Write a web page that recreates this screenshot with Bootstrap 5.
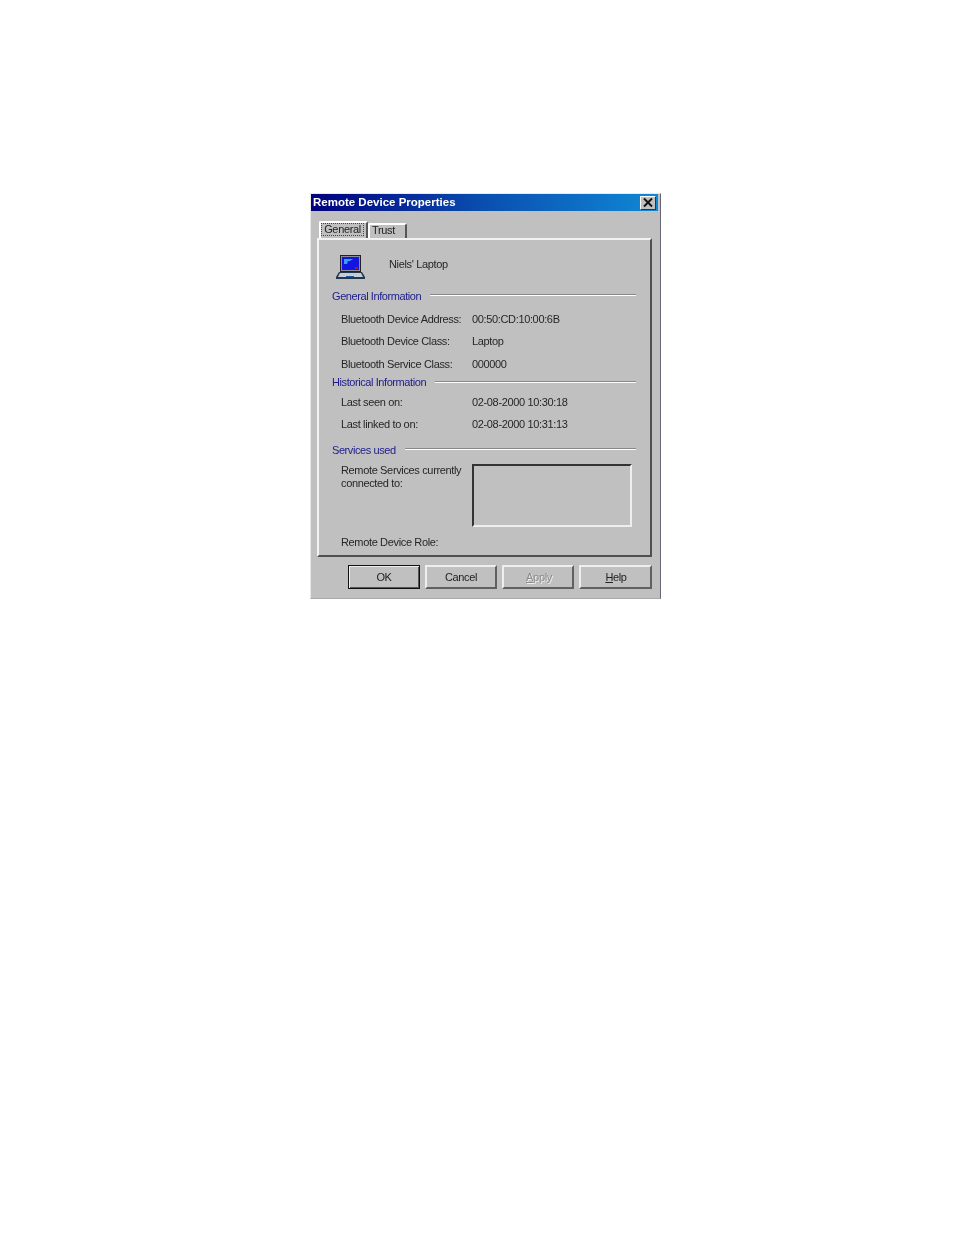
<!DOCTYPE html>
<html lang="en">
<head>
<meta charset="utf-8">
<title>Remote Device Properties</title>
<link href="https://cdn.jsdelivr.net/npm/bootstrap@5.3.0/dist/css/bootstrap.min.css" rel="stylesheet">
<style>
html,body{background:#fff;height:100%;}
body{font-family:"Liberation Sans",Arial,sans-serif;font-size:11px;letter-spacing:-.35px;color:#262626;padding:193px 0 0 310px;}
.dlg{width:351px;height:406px;background:#c0c0c0;border:1px solid #e8e8e8;border-right-color:#667;border-bottom-color:#aaa;filter:blur(.45px);}
.ttl{height:17px;margin-right:2px;background:linear-gradient(90deg,#00007e,#0a4fb0 50%,#1088d4);color:#fff;font-weight:700;font-size:11.5px;letter-spacing:0;padding:0 2px;}
.xbtn{width:16px;height:14px;background:#c0c0c0;border:1px solid;border-color:#fff #333 #333 #fff;}
.tabs{height:27px;padding:10px 0 0 8px;align-items:flex-end;}
.tb{border:2px solid #fff;border-bottom:0;border-right:2px solid #555;border-radius:2px 2px 0 0;display:flex;align-items:center;justify-content:center;color:#222;}
.tb1{width:49px;height:17px;padding-right:2px;}
.tb1 span{border:1px dotted #444;padding:0 2px;line-height:11px;margin-top:-2px;}
.tb2{width:39px;height:15px;padding:0 8px 2px 0;}
.pnl{margin-left:6px;width:335px;height:319px;border:2px solid;border-color:#f2f2f2 #505050 #505050 #f2f2f2;}
.rw{display:flex;align-items:center;}
.hd{color:#1c1c8c;padding-left:13px;letter-spacing:-.42px;}
.hd i{flex:1;height:2px;margin:0 14px 3px 9px;background:linear-gradient(#888 50%,#fff 50%);}
.hd i.lo{margin-bottom:1px;}
.lbl{width:153px;padding-left:22px;flex:none;white-space:nowrap;}
.lst{width:160px;height:63px;border:2px solid;border-color:#333 #eee #eee #333;margin-top:5px;}
.acts{height:41px;padding:8px 8px 0 0;gap:5px;}
.wb{width:72px;height:24px;background:#c0c0c0;border:2px solid;border-color:#eee #606060 #606060 #eee;display:flex;align-items:center;justify-content:center;color:#222;}
.wb.def{border-width:1px;border-color:#111;box-shadow:inset 1px 1px #eee,inset -1px -1px #555;}
.wb.dis{color:#8c8c8c;text-shadow:1px 1px #eee;padding-left:2px;}
.wb.wid{width:73px;padding-left:1px;}
.r0{height:22px;}
.r0.nudge{margin-top:1px;}
.top0{height:50px;padding-left:15px;}
.lap{margin-top:3px;}
.nm{margin:0 0 1px 23px;}
.hd1{height:12px;margin-bottom:6px;}
.hd2{height:14px;}
.hd3{height:14px;margin-top:8px;}
.seen{margin-top:2px;}
.svc{margin-top:2px;}
.svcl{line-height:12.5px;padding-top:5px;}
.role{height:14px;padding-left:22px;margin-top:8px;}
</style>
</head>
<body>
<div class="dlg">
  <div class="ttl d-flex align-items-center justify-content-between"><span>Remote Device Properties</span>
    <span class="xbtn d-flex align-items-center justify-content-center"><svg width="10" height="9" viewBox="0 0 10 9"><path d="M1 0.5 9 8.5M9 0.5 1 8.5" stroke="#111" stroke-width="2" fill="none"/></svg></span>
  </div>
  <div class="tabs d-flex"><div class="tb tb1"><span>General</span></div><div class="tb tb2">Trust</div></div>
  <div class="pnl">
    <div class="rw top0">
      <svg width="32" height="26" viewBox="0 0 32 26" class="flex-none lap">
        <rect x="6" y="1" width="21" height="17" fill="#222"/><rect x="7" y="2" width="19" height="15" fill="#8a8f9a"/>
        <rect x="8" y="3" width="17" height="13" fill="#1414e0"/><path d="M10 5h9l-3 2h-2l-1 3h-3z" fill="#35a0ee"/><rect x="21" y="13" width="3" height="2" fill="#c01020"/>
        <path d="M5 18h23l3 5v2H2v-2z" fill="#23384c"/><path d="M6 19h21l2 4H4z" fill="#c8ccd4"/><rect x="12" y="22" width="8" height="1" fill="#1a5fa8"/>
      </svg>
      <span class="nm">Niels' Laptop</span>
    </div>
    <div class="rw hd hd1"><span>General Information</span><i></i></div>
    <div class="rw r0"><span class="lbl">Bluetooth Device Address:</span><span>00:50:CD:10:00:6B</span></div>
    <div class="rw r0"><span class="lbl">Bluetooth Device Class:</span><span>Laptop</span></div>
    <div class="rw r0 nudge"><span class="lbl">Bluetooth Service Class:</span><span>000000</span></div>
    <div class="rw hd hd2"><span>Historical Information</span><i class="lo"></i></div>
    <div class="rw r0 seen"><span class="lbl">Last seen on:</span><span>02-08-2000 10:30:18</span></div>
    <div class="rw r0"><span class="lbl">Last linked to on:</span><span>02-08-2000 10:31:13</span></div>
    <div class="rw hd hd3"><span>Services used</span><i></i></div>
    <div class="d-flex svc"><span class="lbl svcl">Remote Services currently<br>connected to:</span><div class="lst"></div></div>
    <div class="rw role">Remote Device Role:</div>
  </div>
  <div class="acts d-flex justify-content-end">
    <div class="wb def">OK</div><div class="wb">Cancel</div><div class="wb dis"><span><u>A</u>pply</span></div><div class="wb wid"><span><u>H</u>elp</span></div>
  </div>
</div>
<script src="https://cdn.jsdelivr.net/npm/bootstrap@5.3.0/dist/js/bootstrap.bundle.min.js"></script>
</body>
</html>
